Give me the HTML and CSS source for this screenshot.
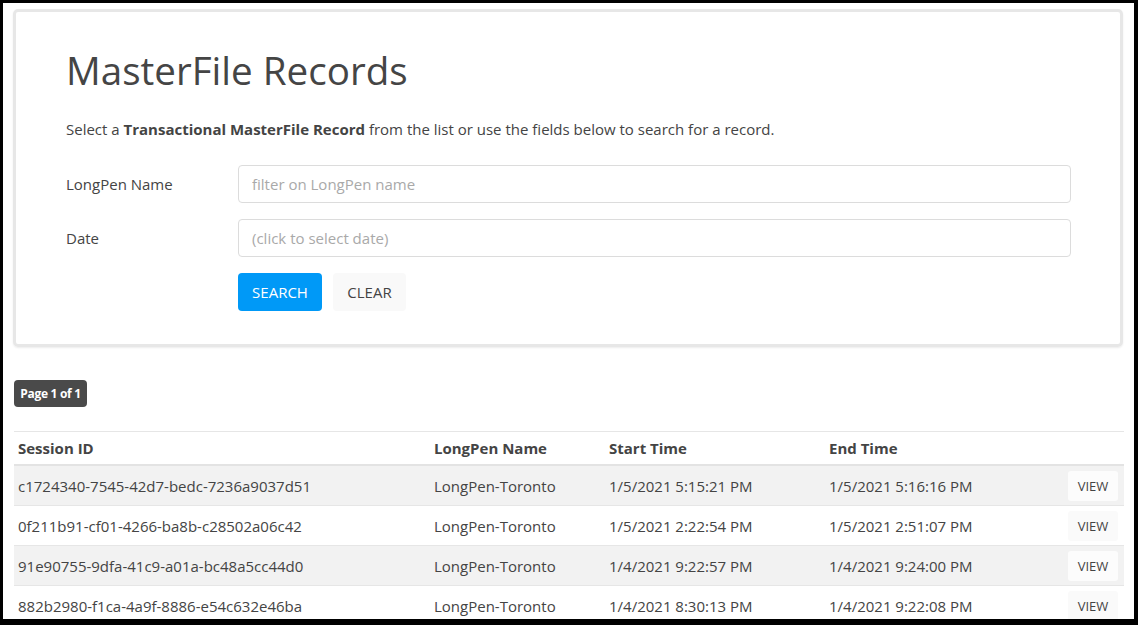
FILE: index.html
```html
<!DOCTYPE html>
<html>
<head>
<meta charset="utf-8">
<link rel="stylesheet" href="styles.css">
</head>
<body>
<div class="frame">
  <section class="card">
    <h1 class="title">MasterFile Records</h1>
    <p class="intro">Select a <b>Transactional MasterFile Record</b> from the list or use the fields below to search for a record.</p>
    <div class="form-row">
      <label class="label">LongPen Name</label>
      <input class="input" type="text" placeholder="filter on LongPen name">
    </div>
    <div class="form-row">
      <label class="label">Date</label>
      <input class="input" type="text" placeholder="(click to select date)">
    </div>
    <div class="form-row">
      <span class="label"></span>
      <div class="actions">
        <button class="btn btn-primary">SEARCH</button>
        <button class="btn btn-light">CLEAR</button>
      </div>
    </div>
  </section>

  <div class="pager"><span class="badge">Page 1 of 1</span></div>

  <table class="records">
    <thead>
      <tr>
        <th class="c-id">Session ID</th>
        <th class="c-name">LongPen Name</th>
        <th class="c-start">Start Time</th>
        <th class="c-end">End Time</th>
        <th class="c-act"></th>
      </tr>
    </thead>
    <tbody>
      <tr class="odd">
        <td>c1724340-7545-42d7-bedc-7236a9037d51</td>
        <td>LongPen-Toronto</td>
        <td>1/5/2021 5:15:21 PM</td>
        <td>1/5/2021 5:16:16 PM</td>
        <td class="c-act"><button class="view">VIEW</button></td>
      </tr>
      <tr>
        <td>0f211b91-cf01-4266-ba8b-c28502a06c42</td>
        <td>LongPen-Toronto</td>
        <td>1/5/2021 2:22:54 PM</td>
        <td>1/5/2021 2:51:07 PM</td>
        <td class="c-act"><button class="view">VIEW</button></td>
      </tr>
      <tr class="odd">
        <td>91e90755-9dfa-41c9-a01a-bc48a5cc44d0</td>
        <td>LongPen-Toronto</td>
        <td>1/4/2021 9:22:57 PM</td>
        <td>1/4/2021 9:24:00 PM</td>
        <td class="c-act"><button class="view">VIEW</button></td>
      </tr>
      <tr>
        <td>882b2980-f1ca-4a9f-8886-e54c632e46ba</td>
        <td>LongPen-Toronto</td>
        <td>1/4/2021 8:30:13 PM</td>
        <td>1/4/2021 9:22:08 PM</td>
        <td class="c-act"><button class="view">VIEW</button></td>
      </tr>
    </tbody>
  </table>
</div>
</body>
</html>
```

FILE: styles.css
```css
html, body {
  margin: 0;
  padding: 0;
  background: #000;
}
body {
  width: 1138px;
  height: 625px;
  overflow: hidden;
  font-family: "Open Sans", "Noto Sans", sans-serif;
  color: #444;
}
.frame {
  box-sizing: border-box;
  margin: 3px 4px 0 3px;
  height: 616px;
  background: #fff;
  padding: 6px 0 0 10px;
  overflow: hidden;
}
.card {
  box-sizing: border-box;
  width: 1110px;
  height: 338px;
  border: 3px solid #e7e7e7;
  border-radius: 5px;
  box-shadow: 0 1px 2px rgba(0,0,0,0.08);
  padding: 34px 49px 0 50px;
}
.title {
  margin: 0;
  font-size: 38.6px;
  line-height: 48px;
  font-weight: 400;
  color: #454545;
}
.intro {
  margin: 24px 0 25px;
  font-size: 15px;
  line-height: 22px;
  color: #444;
}
.intro b { font-weight: 700; }
.form-row {
  display: flex;
  align-items: center;
  margin-bottom: 16px;
}
.label {
  width: 172px;
  flex: none;
  font-size: 15px;
  color: #444;
}
.input {
  box-sizing: border-box;
  width: 833px;
  height: 38px;
  border: 1px solid #dcdcdc;
  border-radius: 4px;
  padding: 0 13px;
  font-family: inherit;
  font-size: 15px;
  color: #444;
  outline: none;
}
.input::placeholder { color: #a9a9a9; }
.actions {
  display: flex;
  gap: 11px;
}
.btn {
  height: 38px;
  border: 0;
  border-radius: 4px;
  font-family: inherit;
  font-size: 15px;
  padding: 0;
}
.btn-primary {
  width: 84px;
  background: #0099f7;
  color: #fff;
}
.btn-light {
  width: 73px;
  background: #f9f9f9;
  color: #444;
}
.pager {
  padding: 33px 0 0 1px;
  height: 27px;
}
.badge {
  display: inline-flex;
  align-items: center;
  justify-content: center;
  width: 73px;
  height: 27px;
  background: #4a4a4a;
  color: #fff;
  border-radius: 4px;
  font-size: 12px;
  font-weight: 700;
  letter-spacing: -0.3px;
}
.records {
  margin: 24px 0 0 1px;
  width: 1110px;
  border-collapse: collapse;
  font-size: 15px;
  color: #444;
}
.records th {
  text-align: left;
  font-weight: 700;
  height: 32px;
  padding: 0 4px;
  border-top: 1px solid #e6e6e6;
  border-bottom: 2px solid #e3e3e3;
}
.records td {
  height: 39px;
  padding: 0 4px;
  border-bottom: 1px solid #e6e6e6;
}
.records tr.odd td { background: #f2f2f2; }
.c-id { width: 408px; }
.c-name { width: 167px; }
.c-start { width: 212px; }
.c-end { width: 231px; }
.records .c-act { text-align: right; padding-right: 6px; }
.view {
  width: 50px;
  height: 30px;
  border: 0;
  border-radius: 3px;
  background: #fafafa;
  color: #444;
  font-family: inherit;
  font-size: 13px;
  padding: 0;
}
.records tr.odd .view { background: #fcfcfc; }
```
